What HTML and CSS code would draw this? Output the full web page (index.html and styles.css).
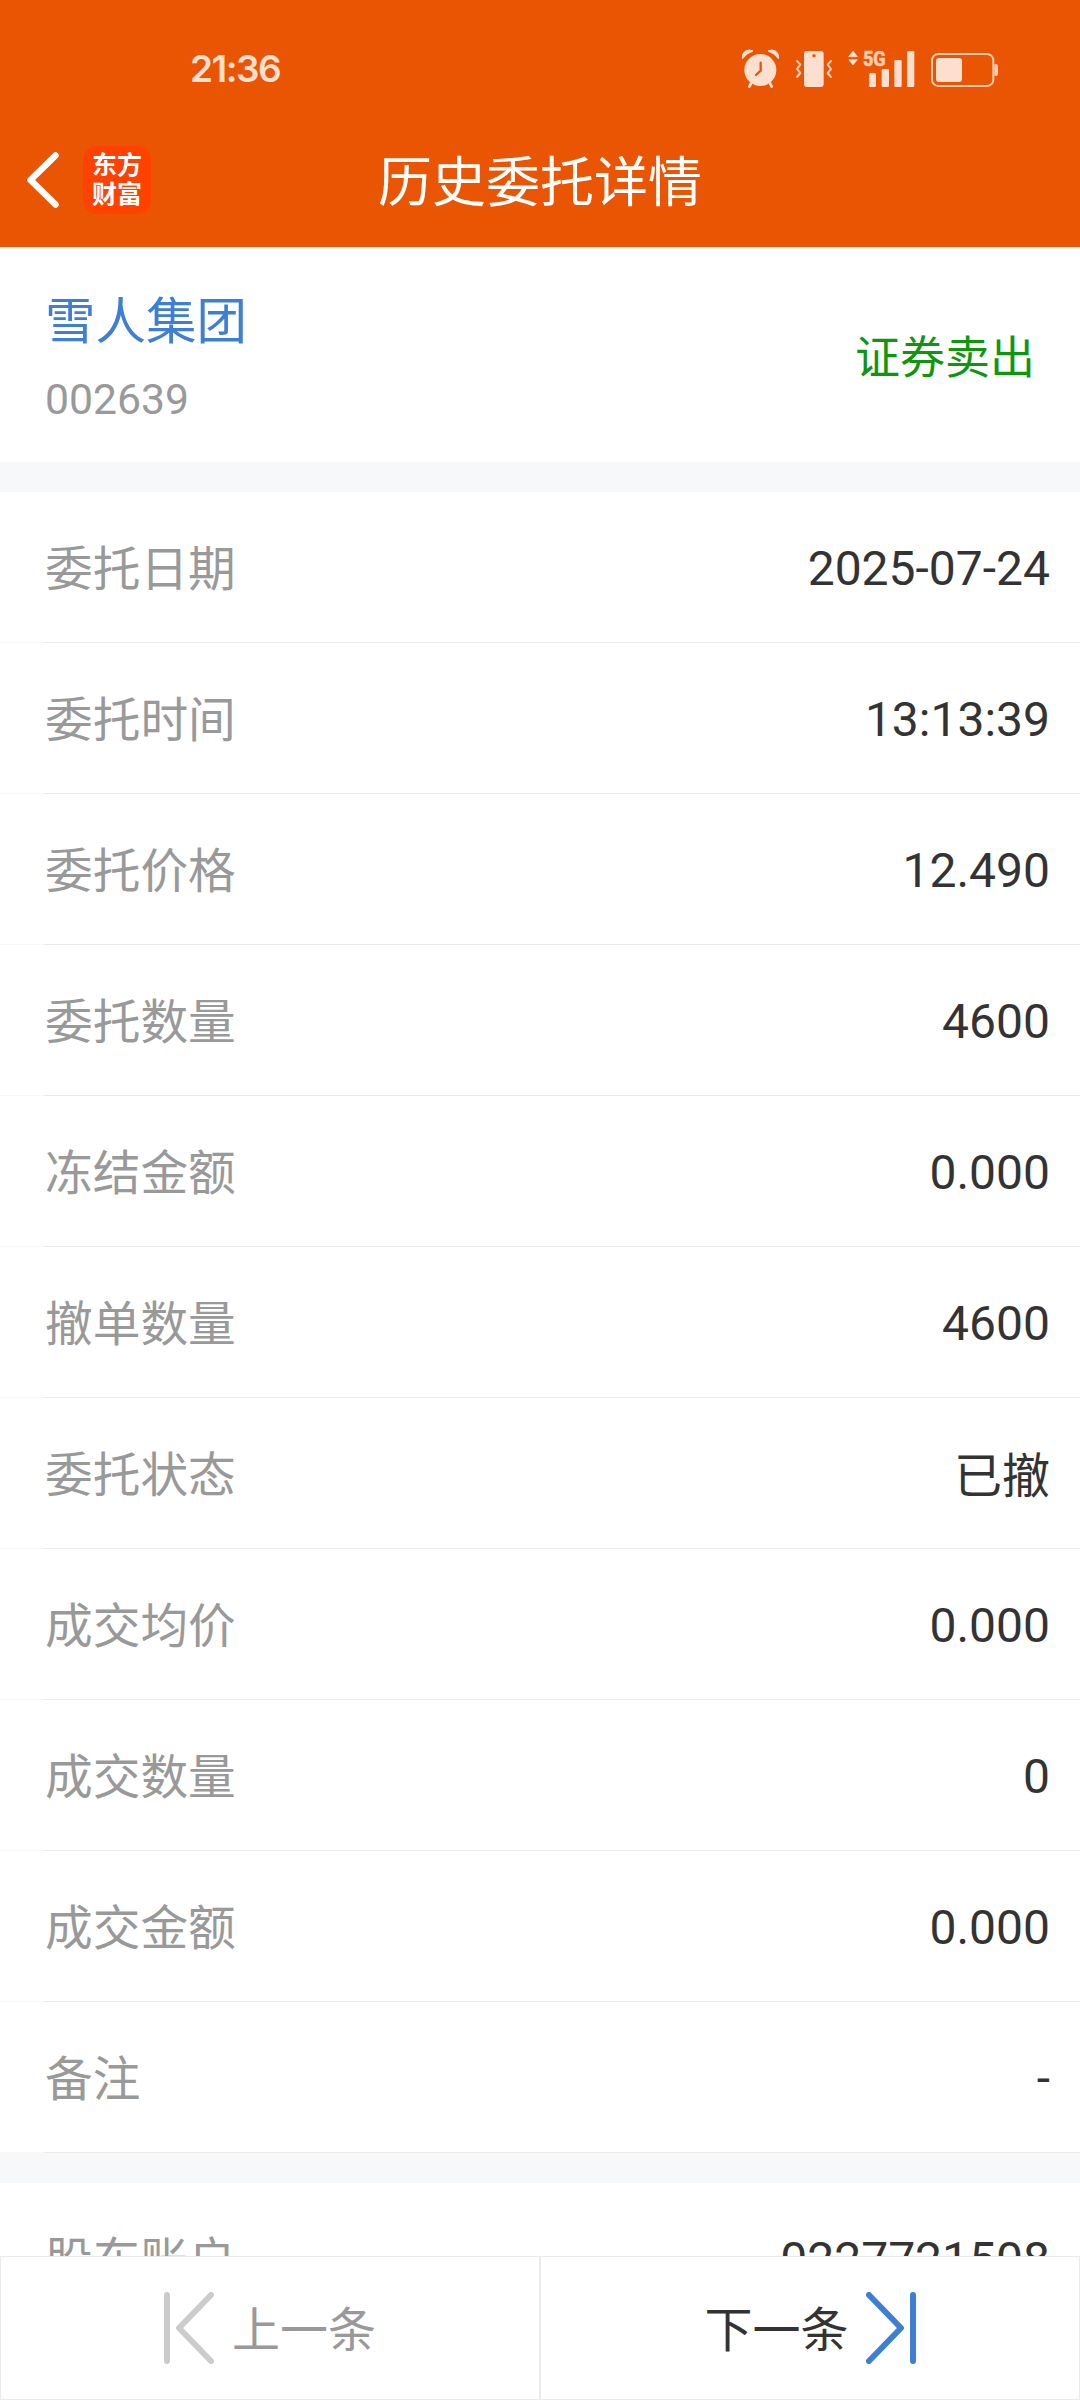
FILE: index.html
```html
<!DOCTYPE html>
<html lang="zh-CN">
<head>
  <meta charset="UTF-8" />
  <meta name="viewport" content="width=device-width, initial-scale=1.0"/>
  <title>历史委托详情</title>
  <link rel="stylesheet" href="styles.css">
</head>
<body>
  <div class="page">
    <header class="header">
      <div class="status-bar">
        <span class="time">21:36</span>
        <div class="status-icons">
          <!-- alarm -->
          <svg width="40" height="42" viewBox="60 54 120 126">
            <path d="M90 160l-5 10M147 160l5 10" fill="none" stroke="#fddfd0" stroke-width="8" stroke-linecap="round"/>
            <path d="M65 86q-4-14 7-22 12-8 24-1-20 6-31 23zM172 86q4-14-7-22-12-8-24-1 20 6 31 23z" fill="#fddfd0" stroke="#fddfd0" stroke-width="3" stroke-linejoin="round"/>
            <circle cx="118" cy="120" r="48" fill="#fddfd0"/>
            <path d="M119 98v24l-14 13" fill="none" stroke="#ea5504" stroke-width="7" stroke-linecap="round" stroke-linejoin="round"/>
          </svg>
          <!-- vibrate -->
          <svg width="40" height="42" viewBox="222 54 120 126">
            <rect x="252" y="63" width="59" height="108" rx="9" fill="#fddfd0"/>
            <circle cx="282" cy="77" r="5" fill="#ea5504"/>
            <path d="M231 93l10 11-10 13 10 12-10 12M333 93l-10 11 10 13-10 12 10 12" fill="none" stroke="#fdceb4" stroke-width="6" stroke-linecap="round" stroke-linejoin="round"/>
          </svg>
          <!-- 5G signal -->
          <svg width="70" height="42" viewBox="381 54 210 126">
            <path d="M386 80l13-17 13 17zM386 89h26l-13 16z" fill="#fddfd0" stroke="#fddfd0" stroke-width="2" stroke-linejoin="round"/>
            <text class="network" x="429" y="107" textLength="68" lengthAdjust="spacingAndGlyphs">5G</text>
            <g fill="#fddfd0">
              <rect x="447" y="129" width="21" height="42" rx="4"/>
              <rect x="485" y="117" width="22" height="54" rx="4"/>
              <rect x="523" y="90" width="22" height="81" rx="4"/>
              <rect x="561" y="63" width="22" height="108" rx="4"/>
            </g>
          </svg>
          <!-- battery -->
          <svg width="70" height="42" viewBox="630 54 210 126">
            <rect x="636" y="72" width="184" height="96" rx="19" fill="none" stroke="#fdceb4" stroke-width="6"/>
            <rect x="648" y="84" width="78" height="72" rx="10" fill="#fddfd0"/>
            <path d="M823 102h4q7 0 7 7v22q0 7-7 7h-4z" fill="#fdceb4"/>
          </svg>
        </div>
      </div>
      <div class="nav-bar">
        <div class="nav-left">
          <svg width="34" height="56" viewBox="0 0 34 56">
            <path d="M30.500 3.500L5.500 28l25 24.500" fill="none" stroke="#fff" stroke-width="6.500" stroke-linecap="round" stroke-linejoin="round"/>
          </svg>
          <div class="logo">东方<br>财富</div>
        </div>
        <h1>历史委托详情</h1>
      </div>
    </header>

    <section class="stock">
      <div>
        <div class="stock-name">雪人集团</div>
        <div class="stock-code">002639</div>
      </div>
      <div class="side">证券卖出</div>
    </section>

    <section class="list">
      <div class="row"><span class="label">委托日期</span><span class="value">2025-07-24</span></div>
      <div class="row"><span class="label">委托时间</span><span class="value">13:13:39</span></div>
      <div class="row"><span class="label">委托价格</span><span class="value">12.490</span></div>
      <div class="row"><span class="label">委托数量</span><span class="value">4600</span></div>
      <div class="row"><span class="label">冻结金额</span><span class="value">0.000</span></div>
      <div class="row"><span class="label">撤单数量</span><span class="value">4600</span></div>
      <div class="row"><span class="label">委托状态</span><span class="value status">已撤</span></div>
      <div class="row"><span class="label">成交均价</span><span class="value">0.000</span></div>
      <div class="row"><span class="label">成交数量</span><span class="value">0</span></div>
      <div class="row"><span class="label">成交金额</span><span class="value">0.000</span></div>
      <div class="row"><span class="label">备注</span><span class="value">-</span></div>
    </section>

    <section class="list account">
      <div class="row"><span class="label">股东账户</span><span class="value">0227721508</span></div>
    </section>

    <footer class="pager">
      <div class="pager-btn prev">
        <svg width="50" height="72" viewBox="0 0 50 72">
          <path d="M3 3v66M47 3L15 36l32 33" fill="none" stroke="#ccc" stroke-width="6" stroke-linecap="round" stroke-linejoin="round"/>
        </svg>
        <span>上一条</span>
      </div>
      <div class="pager-btn next">
        <span>下一条</span>
        <svg width="50" height="72" viewBox="0 0 50 72">
          <path d="M47 3v66M3 3l32 33L3 69" fill="none" stroke="#3e7fd3" stroke-width="6" stroke-linecap="round" stroke-linejoin="round"/>
        </svg>
      </div>
    </footer>
  </div>
</body>
</html>
```
FILE: styles.css
```css
* {
  box-sizing: border-box;
  margin: 0;
  padding: 0;
}

body {
  background-color: #f7f8fa;
  font-family: Roboto, "Noto Sans CJK SC", sans-serif;
  color: #333;
}

svg {
  display: block;
  flex: none;
}

.page {
  width: 1080px;
  height: 2400px;
  display: flex;
  flex-direction: column;
  overflow: hidden;
}

/* header */
.header {
  flex: none;
  height: 247px;
  background-color: #ea5504;
  color: #fff;
}

.status-bar {
  height: 138px;
  display: flex;
  justify-content: space-between;
  align-items: center;
  padding: 0 80px 0 190px;
}

.time {
  padding-bottom: 2px;
  font-family: Inter, sans-serif;
  font-size: 37px;
  font-weight: 600;
  letter-spacing: -1.5px;
  color: #fddfd0;
}

.status-icons {
  display: flex;
  gap: 13px;
}

.network {
  font-family: Roboto, sans-serif;
  font-size: 63px;
  font-weight: 700;
  fill: #fdceb4;
  stroke: #fdceb4;
  stroke-width: 2px;
}

.nav-bar {
  height: 83px;
  display: grid;
  grid-template-columns: 1fr auto 1fr;
  align-items: center;
}

.nav-left {
  display: flex;
  align-items: center;
  gap: 24px;
  padding-left: 25px;
}

.logo {
  width: 68px;
  height: 68px;
  padding-top: 5px;
  border-radius: 14px;
  background-color: #ff4200;
  font-size: 25px;
  font-weight: 700;
  line-height: 29px;
  text-align: center;
}

h1 {
  padding-top: 9px;
  font-size: 54px;
  font-weight: 400;
  line-height: 74px;
}

/* stock summary */
.stock {
  flex: none;
  height: 215px;
  display: flex;
  justify-content: space-between;
  align-items: center;
  padding: 0 45px;
  background-color: #fff;
}

.stock-name {
  padding-top: 3px;
  font-size: 50.5px;
  line-height: 76px;
  color: #3e7fd3;
}

.stock-code {
  font-size: 42.7px;
  line-height: 60px;
  margin-top: 9px;
  color: #999;
}

.side {
  font-size: 45px;
  color: #109510;
}

/* order details */
.list {
  flex: none;
  margin-top: 30px;
}

.row {
  height: 151px;
  display: flex;
  justify-content: space-between;
  align-items: center;
  padding: 0 30px 0 45px;
  border-bottom: 1px solid #eee;
  border-image: linear-gradient(to right, #f8f8f8 45px, #ebebeb 45px) 1;
  background-color: #fff;
  font-size: 48px;
}

.label {
  padding-bottom: 3px;
  font-size: 47.7px;
  color: #999;
}

.value {
  padding-top: 2px;
}

.status {
  padding: 0 0 3px;
}

/* continues underneath the pager */
.account {
  height: 73px;
  overflow: hidden;
}

/* previous / next */
.pager {
  flex: none;
  height: 144px;
  display: flex;
}

.pager-btn {
  flex: 1;
  display: flex;
  align-items: center;
  border: 1px solid #ebebeb;
  background-color: #fff;
  font-size: 48px;
}

.pager-btn span {
  padding-bottom: 4px;
}

.prev {
  gap: 18px;
  padding-left: 163px;
  color: #999;
}

.next {
  gap: 17px;
  padding-left: 164px;
}
```
